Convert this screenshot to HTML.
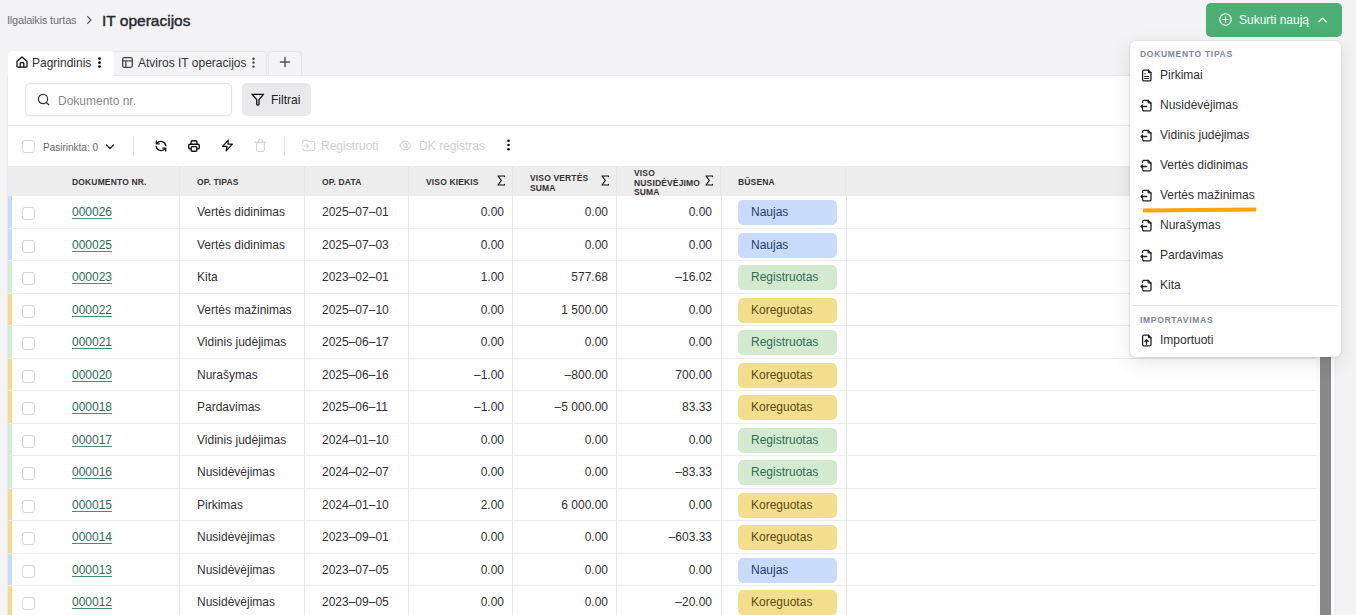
<!DOCTYPE html>
<html><head><meta charset="utf-8"><style>
*{box-sizing:border-box;margin:0;padding:0}
html,body{width:1356px;height:615px;overflow:hidden}
body{background:#f3f3f6;font-family:"Liberation Sans",sans-serif;font-size:12px;color:#303030;position:relative}
.abs{position:absolute}
.ic{position:absolute;overflow:visible}
.crumb{position:absolute;left:7px;top:13.5px;font-size:11px;letter-spacing:-0.2px;color:#6f6f73;white-space:nowrap}
.title{position:absolute;left:102px;top:12px;font-size:15.5px;letter-spacing:0px;-webkit-text-stroke:0.45px #2a2a2e;color:#2a2a2e;white-space:nowrap}
.tab{position:absolute;top:50.5px;height:25.5px;border:1px solid #e6e6e9;border-bottom:none;border-radius:4px 4px 0 0;background:#f3f3f6;white-space:nowrap}
.tab.act{background:#fff;border-color:#fff}
.tabline{position:absolute;left:113px;top:75px;width:1222px;height:1px;background:#e8e8ea}
.tt{position:absolute;top:56px;white-space:nowrap;line-height:14px}
.panel{position:absolute;left:8px;top:75px;width:1327px;height:560px;background:#fff}
.search{position:absolute;left:25px;top:83px;width:207px;height:33px;border:1px solid #e3e3e6;border-radius:5px;box-shadow:0 1px 2px rgba(0,0,0,.06);background:#fff}
.search span{position:absolute;left:32px;top:9.5px;color:#8a8a8e;font-size:12px;line-height:14px}
.filt{position:absolute;left:242px;top:83px;width:69px;height:33px;border-radius:5px;background:#e9e9eb}
.filt span{position:absolute;left:29px;top:10px;font-size:12px;line-height:14px;color:#222}
.sep{position:absolute;left:8px;top:125px;width:1327px;height:1px;background:#ececee}
.cb{position:absolute;width:13px;height:13px;border:1px solid #d4d4d6;border-radius:3px;background:#fff}
.vsep{position:absolute;top:136px;width:1px;height:20px;background:#e3e3e3}
.tb{position:absolute;white-space:nowrap;line-height:14px}
.thead{position:absolute;left:8px;top:166px;width:1308px;height:30px;background:#ededed}
.th{position:absolute;font-size:8.5px;font-weight:bold;letter-spacing:0.15px;color:#333;white-space:nowrap;line-height:9.5px}
.row{position:absolute;left:8px;width:1308px;height:32.5px;border-bottom:1px solid #ececec;background:#fff}
.row .bar{position:absolute;left:0;top:0;width:4px;height:100%}
.bar.n{background:#c8d9fa} .bar.r{background:#d3ead3} .bar.k{background:#f1dc8c}
.row .cb{left:14px;top:11px}
.row span,.row a{position:absolute;top:9px;white-space:nowrap;line-height:14px}
.lnk{left:64px;color:#2d6b55;text-decoration:underline;text-decoration-color:#4f8a73;text-underline-offset:1.5px}
.c2{left:189px} .c3{left:314px}
.n1{right:812px} .n2{right:708px} .n3{right:604px}
.badge{left:730px!important;top:4px!important;width:99px;height:25px;border-radius:5px;padding-left:13px;line-height:25px!important}
.badge.n{background:#c9dbfb;color:#1f3b6e}
.badge.r{background:#d3ead0;color:#2f6d55}
.badge.k{background:#f2df8e;color:#5e4a12}
.vl{position:absolute;top:166px;height:449px;width:1px;background:#e6e6e6}
.scroll{position:absolute;left:1320px;top:357px;width:11px;height:258px;background:#888}
.btn{position:absolute;left:1206px;top:3px;width:136px;height:34px;border-radius:5px;background:#4caf74}
.btn span{position:absolute;left:33px;top:10px;color:#fff;font-size:12px;line-height:14px;white-space:nowrap}
.menu{position:absolute;left:1130px;top:41px;width:211px;height:316px;background:#fff;border-radius:6px;box-shadow:0 6px 20px rgba(0,0,0,.10),0 1px 3px rgba(0,0,0,.08),0 0 0 1px rgba(0,0,0,.03)}
.mh{position:absolute;left:10px;font-size:8.5px;font-weight:bold;letter-spacing:0.7px;color:#7c869e;white-space:nowrap;line-height:9px}
.mi{position:absolute;left:0;width:211px;height:14px;white-space:nowrap}
.mi span{position:absolute;left:30px;top:0;font-size:12px;line-height:14px;color:#303030}
.ul{position:absolute;left:1142.7px;top:207.7px;width:112.7px;height:3.6px;background:#ffa500;transform:rotate(-0.53deg)}
</style></head><body>
<div class="crumb">Ilgalaikis turtas</div>
<svg class="ic" style="left:85px;top:15px" width="8" height="10" viewBox="0 0 8 10"><path d="M2.3 1.2l3.6 3.8-3.6 3.8" fill="none" stroke="#555" stroke-width="1.2"/></svg>
<div class="title">IT operacijos</div>

<div class="tab" style="left:113px;width:154px"></div>
<div class="tab" style="left:267.5px;width:34.5px"></div>
<div class="panel"></div>
<div class="abs" style="left:7px;top:75px;width:1px;height:540px;background:#e9e9eb"></div>
<div class="abs" style="left:1335px;top:75px;width:1px;height:540px;background:#e9e9eb"></div>
<div class="tabline"></div>
<div class="tab act" style="left:8px;width:106px;height:26.5px"></div>

<svg class="ic" style="left:16px;top:56px" width="12" height="12" viewBox="0 0 12 12" fill="none" stroke="#111" stroke-width="1.3" stroke-linecap="round" stroke-linejoin="round"><path d="M1 5.2L6 0.9l5 4.3V10.2a1 1 0 0 1-1 1H2a1 1 0 0 1-1-1z"/><path d="M4.2 11.2V7.4a.8.8 0 0 1 .8-.8h2a.8.8 0 0 1 .8.8v3.8"/></svg>
<div class="tt" style="left:32px">Pagrindinis</div>
<svg class="ic" style="left:98px;top:57px" width="3" height="11" viewBox="0 0 3 11"><circle cx="1.5" cy="1.6" r="1.4" fill="#111"/><circle cx="1.5" cy="5.7" r="1.4" fill="#111"/><circle cx="1.5" cy="9.6" r="1.4" fill="#111"/></svg>
<svg class="ic" style="left:122px;top:57px" width="11" height="11" viewBox="0 0 11 11" fill="none" stroke="#444" stroke-width="1.3" stroke-linecap="round" stroke-linejoin="round"><rect x="0.7" y="0.7" width="9.6" height="9.6" rx="1.5"/><path d="M0.7 3.8h9.6M3.8 3.8v6.5"/></svg>
<div class="tt" style="left:138px;color:#333">Atviros IT operacijos</div>
<svg class="ic" style="left:252px;top:57px" width="3" height="11" viewBox="0 0 3 11"><circle cx="1.5" cy="1.7" r="1.2" fill="#444"/><circle cx="1.5" cy="5.6" r="1.2" fill="#444"/><circle cx="1.5" cy="9.6" r="1.2" fill="#444"/></svg>
<svg class="ic" style="left:280px;top:57px" width="10" height="10" viewBox="0 0 10 10" fill="none" stroke="#555" stroke-width="1.5" stroke-linecap="round" stroke-linejoin="round"><path d="M5 0.5v9M0.5 5h9"/></svg>

<div class="search"><span>Dokumento nr.</span></div>
<svg class="ic" style="left:37px;top:93px" width="13" height="13" viewBox="0 0 13 13" fill="none" stroke="#333" stroke-width="1.2" stroke-linecap="round" stroke-linejoin="round"><circle cx="6" cy="6" r="4.6"/><path d="M9.4 9.5l2.4 2.3"/></svg>
<div class="filt"><span>Filtrai</span></div>
<svg class="ic" style="left:251px;top:93px" width="14" height="14" viewBox="0 0 14 14" fill="none" stroke="#111" stroke-width="1.3" stroke-linecap="round" stroke-linejoin="round"><path d="M1 1.3h11.6L8 6.6v4.3c0 .7-.4 1.1-1 1.1h-.3c-.6 0-1-.4-1-1.1V6.6z"/></svg>
<div class="sep"></div>

<i class="cb" style="left:22px;top:140px"></i>
<div class="tb" style="left:43px;top:141px;font-size:10px;color:#666">Pasirinkta: 0</div>
<svg class="ic" style="left:105px;top:143px" width="10" height="8" viewBox="0 0 10 8" fill="none" stroke="#222" stroke-width="1.4" stroke-linecap="round" stroke-linejoin="round"><path d="M1.5 2l3.5 3.5L8.5 2"/></svg>
<div class="vsep" style="left:133px"></div>
<svg class="ic" style="left:154.5px;top:139.5px" width="12" height="12" viewBox="0 0 12 12" fill="none" stroke="#111" stroke-width="1.25" stroke-linecap="round" stroke-linejoin="round"><path d="M10.9 5.6A5.1 5.1 0 0 0 1.7 3.6M1.3 0.9V3.9H4.3"/><path d="M1.1 6.4A5.1 5.1 0 0 0 10.3 8.4M10.7 11.1V8.1H7.7"/></svg>
<svg class="ic" style="left:187px;top:139px" width="14" height="14" viewBox="0 0 24 24" fill="none" stroke="#111" stroke-width="2.3" stroke-linecap="round" stroke-linejoin="round"><path d="M17 17h2a2 2 0 0 0 2-2v-4a2 2 0 0 0-2-2H5a2 2 0 0 0-2 2v4a2 2 0 0 0 2 2h2"/><path d="M17 9V5a2 2 0 0 0-2-2H9a2 2 0 0 0-2 2v4"/><path d="M7 15a2 2 0 0 1 2-2h6a2 2 0 0 1 2 2v4a2 2 0 0 1-2 2H9a2 2 0 0 1-2-2z"/></svg>
<svg class="ic" style="left:221px;top:139px" width="13" height="13" viewBox="0 0 24 24" fill="none" stroke="#111" stroke-width="2.3" stroke-linecap="round" stroke-linejoin="round"><path d="M13.5 2L3 13.5h8L9.5 22 21 9.5h-8z"/></svg>
<svg class="ic" style="left:254px;top:138px" width="13" height="15" viewBox="0 0 13 15" fill="none" stroke="#d6d6d6" stroke-width="1.2" stroke-linecap="round" stroke-linejoin="round"><path d="M4.6 4V2.6a1 1 0 0 1 1-1h1.8a1 1 0 0 1 1 1V4"/><path d="M1.3 4.3h10.4"/><path d="M2.6 4.3v7.6a1.6 1.6 0 0 0 1.6 1.6h4.6a1.6 1.6 0 0 0 1.6-1.6V4.3"/></svg>
<div class="vsep" style="left:284px"></div>
<svg class="ic" style="left:301px;top:139px" width="15" height="13" viewBox="0 0 15 13" fill="none" stroke="#d6d6d6" stroke-width="1.2" stroke-linecap="round" stroke-linejoin="round"><path d="M1.8 4.4V2.5a1.3 1.3 0 0 1 1.3-1.3h3l1.3 1.3h5a1.3 1.3 0 0 1 1.3 1.3v6.4a1.3 1.3 0 0 1-1.3 1.3H3.1a1.3 1.3 0 0 1-1.3-1.3v-0.7"/><path d="M0.8 7h6.6M5.6 5.2l1.8 1.8-1.8 1.8"/></svg>
<div class="tb" style="left:321px;top:139px;color:#cfcfcf">Registruoti</div>
<svg class="ic" style="left:399px;top:139px" width="13" height="13" viewBox="0 0 13 13" fill="none" stroke="#d4d4d4" stroke-width="1.2" stroke-linecap="round" stroke-linejoin="round"><path d="M0.9 6.5C2.6 3.6 4.4 2.1 6.5 2.1S10.4 3.6 12.1 6.5C10.4 9.4 8.6 10.9 6.5 10.9S2.6 9.4 0.9 6.5z"/><circle cx="6.5" cy="6.5" r="2"/></svg>
<div class="tb" style="left:419px;top:139px;color:#cfcfcf">DK registras</div>
<svg class="ic" style="left:507px;top:139px" width="3" height="12" viewBox="0 0 3 12"><circle cx="1.5" cy="1.8" r="1.3" fill="#111"/><circle cx="1.5" cy="6" r="1.3" fill="#111"/><circle cx="1.5" cy="10.2" r="1.3" fill="#111"/></svg>

<div class="thead"></div>
<div class="th" style="left:72px;top:178px">DOKUMENTO NR.</div>
<div class="th" style="left:197px;top:178px">OP. TIPAS</div>
<div class="th" style="left:322px;top:178px">OP. DATA</div>
<div class="th" style="left:426px;top:178px">VISO KIEKIS</div>
<div class="th" style="left:530px;top:174px">VISO VERTĖS<br>SUMA</div>
<div class="th" style="left:634px;top:169px">VISO<br>NUSIDĖVĖJIMO<br>SUMA</div>
<div class="th" style="left:738px;top:178px">BŪSENA</div>
<svg class="ic" style="left:497px;top:175px" width="9" height="11" viewBox="0 0 9 11" fill="none" stroke="#111" stroke-width="1.2" stroke-linecap="round" stroke-linejoin="round"><path d="M7.5 1.6V1H1l3.4 4.5L1 10h6.5v-0.6"/></svg>
<svg class="ic" style="left:601px;top:175px" width="9" height="11" viewBox="0 0 9 11" fill="none" stroke="#111" stroke-width="1.2" stroke-linecap="round" stroke-linejoin="round"><path d="M7.5 1.6V1H1l3.4 4.5L1 10h6.5v-0.6"/></svg>
<svg class="ic" style="left:705px;top:175px" width="9" height="11" viewBox="0 0 9 11" fill="none" stroke="#111" stroke-width="1.2" stroke-linecap="round" stroke-linejoin="round"><path d="M7.5 1.6V1H1l3.4 4.5L1 10h6.5v-0.6"/></svg>

<div class="row" style="top:196.00px"><i class="bar n"></i><i class="cb"></i><a class="lnk">000026</a><span class="c2">Vertės didinimas</span><span class="c3">2025–07–01</span><span class="n1">0.00</span><span class="n2">0.00</span><span class="n3">0.00</span><span class="badge n">Naujas</span></div><div class="row" style="top:228.50px"><i class="bar n"></i><i class="cb"></i><a class="lnk">000025</a><span class="c2">Vertės didinimas</span><span class="c3">2025–07–03</span><span class="n1">0.00</span><span class="n2">0.00</span><span class="n3">0.00</span><span class="badge n">Naujas</span></div><div class="row" style="top:261.00px"><i class="bar r"></i><i class="cb"></i><a class="lnk">000023</a><span class="c2">Kita</span><span class="c3">2023–02–01</span><span class="n1">1.00</span><span class="n2">577.68</span><span class="n3">–16.02</span><span class="badge r">Registruotas</span></div><div class="row" style="top:293.50px"><i class="bar k"></i><i class="cb"></i><a class="lnk">000022</a><span class="c2">Vertės mažinimas</span><span class="c3">2025–07–10</span><span class="n1">0.00</span><span class="n2">1 500.00</span><span class="n3">0.00</span><span class="badge k">Koreguotas</span></div><div class="row" style="top:326.00px"><i class="bar r"></i><i class="cb"></i><a class="lnk">000021</a><span class="c2">Vidinis judėjimas</span><span class="c3">2025–06–17</span><span class="n1">0.00</span><span class="n2">0.00</span><span class="n3">0.00</span><span class="badge r">Registruotas</span></div><div class="row" style="top:358.50px"><i class="bar k"></i><i class="cb"></i><a class="lnk">000020</a><span class="c2">Nurašymas</span><span class="c3">2025–06–16</span><span class="n1">–1.00</span><span class="n2">–800.00</span><span class="n3">700.00</span><span class="badge k">Koreguotas</span></div><div class="row" style="top:391.00px"><i class="bar k"></i><i class="cb"></i><a class="lnk">000018</a><span class="c2">Pardavimas</span><span class="c3">2025–06–11</span><span class="n1">–1.00</span><span class="n2">–5 000.00</span><span class="n3">83.33</span><span class="badge k">Koreguotas</span></div><div class="row" style="top:423.50px"><i class="bar r"></i><i class="cb"></i><a class="lnk">000017</a><span class="c2">Vidinis judėjimas</span><span class="c3">2024–01–10</span><span class="n1">0.00</span><span class="n2">0.00</span><span class="n3">0.00</span><span class="badge r">Registruotas</span></div><div class="row" style="top:456.00px"><i class="bar r"></i><i class="cb"></i><a class="lnk">000016</a><span class="c2">Nusidėvėjimas</span><span class="c3">2024–02–07</span><span class="n1">0.00</span><span class="n2">0.00</span><span class="n3">–83.33</span><span class="badge r">Registruotas</span></div><div class="row" style="top:488.50px"><i class="bar k"></i><i class="cb"></i><a class="lnk">000015</a><span class="c2">Pirkimas</span><span class="c3">2024–01–10</span><span class="n1">2.00</span><span class="n2">6 000.00</span><span class="n3">0.00</span><span class="badge k">Koreguotas</span></div><div class="row" style="top:521.00px"><i class="bar k"></i><i class="cb"></i><a class="lnk">000014</a><span class="c2">Nusidėvėjimas</span><span class="c3">2023–09–01</span><span class="n1">0.00</span><span class="n2">0.00</span><span class="n3">–603.33</span><span class="badge k">Koreguotas</span></div><div class="row" style="top:553.50px"><i class="bar n"></i><i class="cb"></i><a class="lnk">000013</a><span class="c2">Nusidėvėjimas</span><span class="c3">2023–07–05</span><span class="n1">0.00</span><span class="n2">0.00</span><span class="n3">0.00</span><span class="badge n">Naujas</span></div><div class="row" style="top:586.00px"><i class="bar k"></i><i class="cb"></i><a class="lnk">000012</a><span class="c2">Nusidėvėjimas</span><span class="c3">2023–09–05</span><span class="n1">0.00</span><span class="n2">0.00</span><span class="n3">–20.00</span><span class="badge k">Koreguotas</span></div>

<div class="vl" style="left:179px"></div>
<div class="vl" style="left:304px"></div>
<div class="vl" style="left:408px"></div>
<div class="vl" style="left:512px"></div>
<div class="vl" style="left:616px"></div>
<div class="vl" style="left:721px;top:196px;height:419px"></div>
<div class="vl" style="left:846px;top:196px;height:419px"></div>
<div class="vl" style="left:720px;height:30px"></div>
<div class="vl" style="left:845px;height:30px"></div>

<div class="abs" style="left:1316px;top:166px;width:19px;height:449px;background:#fbfbfb"></div>
<div class="scroll"></div>

<div class="btn"><span>Sukurti naują</span></div>
<svg class="ic" style="left:1219px;top:13px" width="13" height="13" viewBox="0 0 13 13" fill="none" stroke="#fff" stroke-width="1.1" stroke-linecap="round" stroke-linejoin="round"><circle cx="6.5" cy="6.5" r="5.7"/><path d="M6.5 3.8v5.4M3.8 6.5h5.4"/></svg>
<svg class="ic" style="left:1317px;top:16px" width="11" height="8" viewBox="0 0 11 8" fill="none" stroke="#fff" stroke-width="1.3" stroke-linecap="round" stroke-linejoin="round"><path d="M1.8 5.8l3.7-3.7 3.7 3.7"/></svg>
<div class="menu">
<div class="mh" style="top:9px">DOKUMENTO TIPAS</div>
<div class="mi" style="top:27px"><svg class="ic" style="left:11px;top:1px" width="11" height="13" viewBox="0 0 11 13" fill="none" stroke="#222" stroke-width="1.3" stroke-linecap="round" stroke-linejoin="round"><path d="M3 1.2h4.5l2.5 2.5v6.8a1.3 1.3 0 0 1-1.3 1.3H2.9a1.3 1.3 0 0 1-1.3-1.3V2.5a1.3 1.3 0 0 1 1.3-1.3z"/><path d="M7.5 1.2v1.8a.7.7 0 0 0 .7.7h1.8"/><path d="M3.5 7.5h4M3.5 9.5h4" stroke-width="1.1"/><path d="M3.6 4.8h0.8" stroke-width="1"/></svg><span>Pirkimai</span></div><div class="mi" style="top:57px"><svg class="ic" style="left:10px;top:1px" width="12" height="13" viewBox="0 0 12 13" fill="none" stroke="#222" stroke-width="1.3" stroke-linecap="round" stroke-linejoin="round"><path d="M2.6 3.6V2.6a1.3 1.3 0 0 1 1.3-1.3h4.2l2.9 2.9v6.3a1.3 1.3 0 0 1-1.3 1.3H3.9a1.3 1.3 0 0 1-1.3-1.3v-0.5"/><path d="M8.1 1.3v1.9a.7.7 0 0 0 .7.7h2.2"/><path d="M6.7 7.5H1M2.6 5.9L1 7.5l1.6 1.6"/></svg><span>Nusidėvėjimas</span></div><div class="mi" style="top:87px"><svg class="ic" style="left:10px;top:1px" width="12" height="13" viewBox="0 0 12 13" fill="none" stroke="#222" stroke-width="1.3" stroke-linecap="round" stroke-linejoin="round"><path d="M2.6 3.6V2.6a1.3 1.3 0 0 1 1.3-1.3h4.2l2.9 2.9v6.3a1.3 1.3 0 0 1-1.3 1.3H3.9a1.3 1.3 0 0 1-1.3-1.3v-0.5"/><path d="M8.1 1.3v1.9a.7.7 0 0 0 .7.7h2.2"/><path d="M6.7 7.5H1M2.6 5.9L1 7.5l1.6 1.6"/></svg><span>Vidinis judėjimas</span></div><div class="mi" style="top:117px"><svg class="ic" style="left:10px;top:1px" width="12" height="13" viewBox="0 0 12 13" fill="none" stroke="#222" stroke-width="1.3" stroke-linecap="round" stroke-linejoin="round"><path d="M2.6 3.6V2.6a1.3 1.3 0 0 1 1.3-1.3h4.2l2.9 2.9v6.3a1.3 1.3 0 0 1-1.3 1.3H3.9a1.3 1.3 0 0 1-1.3-1.3v-0.5"/><path d="M8.1 1.3v1.9a.7.7 0 0 0 .7.7h2.2"/><path d="M6.7 7.5H1M2.6 5.9L1 7.5l1.6 1.6"/></svg><span>Vertės didinimas</span></div><div class="mi" style="top:147px"><svg class="ic" style="left:10px;top:1px" width="12" height="13" viewBox="0 0 12 13" fill="none" stroke="#222" stroke-width="1.3" stroke-linecap="round" stroke-linejoin="round"><path d="M2.6 3.6V2.6a1.3 1.3 0 0 1 1.3-1.3h4.2l2.9 2.9v6.3a1.3 1.3 0 0 1-1.3 1.3H3.9a1.3 1.3 0 0 1-1.3-1.3v-0.5"/><path d="M8.1 1.3v1.9a.7.7 0 0 0 .7.7h2.2"/><path d="M6.7 7.5H1M2.6 5.9L1 7.5l1.6 1.6"/></svg><span>Vertės mažinimas</span></div><div class="mi" style="top:177px"><svg class="ic" style="left:10px;top:1px" width="12" height="13" viewBox="0 0 12 13" fill="none" stroke="#222" stroke-width="1.3" stroke-linecap="round" stroke-linejoin="round"><path d="M2.6 3.6V2.6a1.3 1.3 0 0 1 1.3-1.3h4.2l2.9 2.9v6.3a1.3 1.3 0 0 1-1.3 1.3H3.9a1.3 1.3 0 0 1-1.3-1.3v-0.5"/><path d="M8.1 1.3v1.9a.7.7 0 0 0 .7.7h2.2"/><path d="M6.7 7.5H1M2.6 5.9L1 7.5l1.6 1.6"/></svg><span>Nurašymas</span></div><div class="mi" style="top:207px"><svg class="ic" style="left:10px;top:1px" width="12" height="13" viewBox="0 0 12 13" fill="none" stroke="#222" stroke-width="1.3" stroke-linecap="round" stroke-linejoin="round"><path d="M2.6 3.6V2.6a1.3 1.3 0 0 1 1.3-1.3h4.2l2.9 2.9v6.3a1.3 1.3 0 0 1-1.3 1.3H3.9a1.3 1.3 0 0 1-1.3-1.3v-0.5"/><path d="M8.1 1.3v1.9a.7.7 0 0 0 .7.7h2.2"/><path d="M6.7 7.5H1M2.6 5.9L1 7.5l1.6 1.6"/></svg><span>Pardavimas</span></div><div class="mi" style="top:237px"><svg class="ic" style="left:10px;top:1px" width="12" height="13" viewBox="0 0 12 13" fill="none" stroke="#222" stroke-width="1.3" stroke-linecap="round" stroke-linejoin="round"><path d="M2.6 3.6V2.6a1.3 1.3 0 0 1 1.3-1.3h4.2l2.9 2.9v6.3a1.3 1.3 0 0 1-1.3 1.3H3.9a1.3 1.3 0 0 1-1.3-1.3v-0.5"/><path d="M8.1 1.3v1.9a.7.7 0 0 0 .7.7h2.2"/><path d="M6.7 7.5H1M2.6 5.9L1 7.5l1.6 1.6"/></svg><span>Kita</span></div>
<div class="abs" style="left:3px;top:264px;width:205px;height:1px;background:#e4e4e4"></div>
<div class="mh" style="top:275px">IMPORTAVIMAS</div>
<div class="mi" style="top:292px"><svg class="ic" style="left:11px;top:1px" width="11" height="13" viewBox="0 0 11 13" fill="none" stroke="#222" stroke-width="1.3" stroke-linecap="round" stroke-linejoin="round"><path d="M3 1.2h4.5l2.5 2.5v6.8a1.3 1.3 0 0 1-1.3 1.3H2.9a1.3 1.3 0 0 1-1.3-1.3V2.5a1.3 1.3 0 0 1 1.3-1.3z"/><path d="M7.5 1.2v1.8a.7.7 0 0 0 .7.7h1.8"/><path d="M5.5 10.3V5.8M3.8 7.5l1.7-1.7 1.7 1.7"/></svg><span>Importuoti</span></div>
</div>
<div class="ul"></div>
</body></html>
